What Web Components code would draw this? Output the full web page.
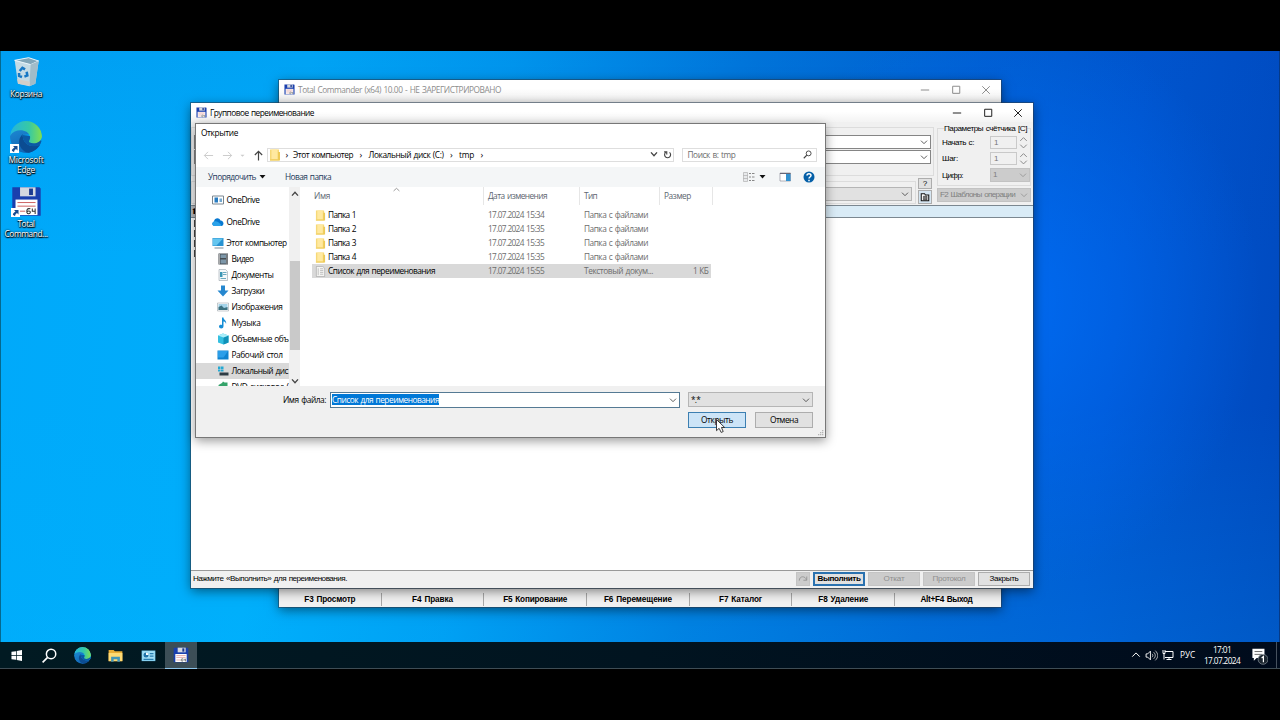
<!DOCTYPE html>
<html lang="ru">
<head>
    <meta charset="UTF-8">
    <meta name="viewport" content="width=device-width, initial-scale=1.0">
    <title>Групповое переименование</title>
    <style>
        body {
            margin: 0;
            background: #000;
            font: 8.3px/12px "Open Sans", "Noto Sans", sans-serif;
            word-spacing: .8px;
            color: #000;
            overflow: hidden;
        }
    </style>
</head>
<body>
    <template id="tmpl-desktop">
        <style>
            :host {
                display: grid;
                grid-template-rows: 591px 27px;
                box-sizing: border-box;
                width: 1280px;
                height: 720px;
                padding: 51px 0;
            }

            .wall {
                position: relative;
                overflow: hidden;
                border-left: 1px solid #05698f;
                border-right: 1px solid #063a86;
                background:
                    radial-gradient(ellipse 260px 290px at 1000px 250px, rgba(0, 112, 255, .7), rgba(0, 100, 245, 0)),
                    linear-gradient(180deg, rgba(0, 70, 180, .1), rgba(0, 120, 220, 0) 35%, rgba(0, 190, 255, 0) 60%, rgba(0, 190, 255, .14)),
                    linear-gradient(97deg, #00a9fa 0, #00adfb 23%, #009cf2 38%, #0078dd 56%, #0060d2 73%, #0056d0 85%, #0048bd 100%);
            }

            .icons {
                display: flex;
                flex-direction: column;
                width: 50px;
                padding-top: 4px;
            }
        </style>
        <div class="wall">
            <div class="icons"><slot name="icon"></slot></div>
            <slot></slot>
        </div>
        <slot name="taskbar"></slot>
    </template>

    <template id="tmpl-shortcut">
        <style>
            :host {
                display: flex;
                flex-direction: column;
                align-items: center;
                height: 65.5px;
                color: #fff;
                line-height: 10px;
                text-align: center;
                text-shadow: 0 1px 1px #000, 0 0 2px #000, 1px 1px 1px rgba(0, 0, 0, .8);
            }

            .pic {
                display: grid;
                margin-bottom: 2px;
            }

            .arrow,
            ::slotted([slot="pic"]) {
                grid-area: 1 / 1;
            }

            .arrow {
                align-self: end;
                justify-self: start;
            }

            :host(:not([link])) .arrow {
                display: none;
            }
        </style>
        <div class="pic">
            <slot name="pic"></slot>
            <win-icon class="arrow" name="link" size="9"></win-icon>
        </div>
        <slot></slot>
    </template>

    <template id="tmpl-window">
        <style>
            :host {
                position: absolute;
                display: flex;
                flex-direction: column;
                box-sizing: border-box;
                background: #f0f0f0;
                box-shadow: 0 0 0 1px rgba(40, 60, 80, .55), 0 3px 11px rgba(0, 0, 0, .5);
            }

            header {
                display: flex;
                align-items: center;
                flex: none;
                height: 19px;
                padding: 0 10px 0 5px;
                background: linear-gradient(#fff 45%, #f3f3f3);
            }

            :host([inactive]) header {
                color: #8d8d8d;
            }

            .title {
                flex: 1;
                margin-left: 3px;
            }

            .buttons {
                display: flex;
                gap: 20.5px;
            }

            :host([inactive]) .buttons {
                opacity: .5;
            }

            .body {
                display: flex;
                flex-direction: column;
                flex: 1;
                min-height: 0;
            }
        </style>
        <header>
            <win-icon name="floppy" size="11"></win-icon>
            <div class="title"><slot name="title"></slot></div>
            <div class="buttons">
                <win-icon name="min" size="10"></win-icon>
                <win-icon name="max" size="10"></win-icon>
                <win-icon name="close" size="10"></win-icon>
            </div>
        </header>
        <div class="body"><slot></slot></div>
    </template>

    <template id="tmpl-fkeys">
        <style>
            :host {
                display: grid;
                grid-template-columns: repeat(7, 102.7px);
                align-items: center;
                height: 16px;
                margin-top: auto;
                padding-top: 2px;
                border-top: 1px solid #9a9a9a;
                background: #f2f2f2;
                font: bold 8.2px/13px "Liberation Sans", sans-serif;
                color: #000;
                text-align: center;
            }

            ::slotted(*) {
                border-right: 1px solid #a9a9a9;
            }

            ::slotted(:last-child) {
                border-right: 0;
            }
        </style>
        <slot></slot>
    </template>

    <template id="tmpl-button">
        <style>
            :host {
                display: flex;
                align-items: center;
                justify-content: center;
                box-sizing: border-box;
                height: 14px;
                border: 1px solid #adadad;
                background: #e1e1e1;
                color: #000;
            }

            :host([disabled]) {
                border-color: #c4c4c4;
                background: #cccccc;
                color: #8f8f8f;
            }

            :host([primary]) {
                border: 2px solid #2a72b0;
            }

            :host([hot]) {
                border: 1px solid #3c7fb1;
                background: #cce4f7;
            }
        </style>
        <slot></slot>
    </template>

    <template id="tmpl-combo">
        <style>
            :host {
                display: flex;
                align-items: center;
                justify-content: space-between;
                box-sizing: border-box;
                height: 14px;
                padding: 0 2px 0 2px;
                border: 1px solid #858585;
                background: #fff;
            }

            :host([grey]) {
                border-color: #b5b5b5;
                background: #e1e1e1;
            }

            :host([disabled]) {
                border-color: #c2c2c2;
                background: #cccccc;
                color: #808080;
            }

            :host([disabled]) win-icon {
                opacity: .4;
            }
        </style>
        <span><slot></slot></span>
        <win-icon name="down" size="8"></win-icon>
    </template>

    <template id="tmpl-rename">
        <style>
            :host {
                display: flex;
                flex-direction: column;
                flex: 1;
                min-height: 0;
                font: 8.1px/12px "Liberation Sans", sans-serif;
            }

            .options {
                display: flex;
                justify-content: flex-end;
                box-sizing: border-box;
                height: 83px;
                padding: 4px 2px 0 0;
                background: #f0f0f0;
            }

            .left {
                display: flex;
                flex-direction: column;
                width: 743px;
                margin-right: 3px;
            }

            .group {
                box-sizing: border-box;
                border: 1px solid #dcdcdc;
            }

            .masks {
                display: flex;
                flex-direction: column;
                gap: 1px;
                height: 49px;
                margin-top: 1px;
                padding: 7px 2px 0;
            }

            .lower {
                display: flex;
                gap: 2px;
                padding: 2px 2px 0 0;
            }

            .search {
                flex: 1;
                height: 23px;
                margin-top: 3px;
                padding: 5px 3px 0;
            }

            .tools {
                display: flex;
                flex-direction: column;
                gap: 1px;
                width: 14px;
            }

            .tools win-button {
                height: 11px;
            }

            .tools win-button + win-button {
                height: 14px;
                background: #d6e6f2;
            }

            .right {
                width: 94px;
            }

            .counter {
                display: grid;
                grid-template-columns: 48px 27px 1fr;
                grid-template-rows: 12px 13px 14px;
                row-gap: 3.5px;
                align-items: center;
                height: 58px;
                margin-top: 2px;
                padding: 7px 1px 0 4px;
            }

            .counter fit-text {
                margin-top: 2px;
            }

            .legend {
                height: 0;
                padding-left: 7px;
                line-height: 6px;
            }

            .legend fit-text {
                position: relative;
                background: #f0f0f0;
            }

            .num {
                box-sizing: border-box;
                height: 13px;
                padding-left: 3px;
                border: 1px solid #c9c9c9;
                line-height: 11px;
                color: #777;
            }

            .counter win-combo {
                grid-column: 2 / 4;
            }

            .counter win-icon {
                justify-self: center;
            }

            .right > win-combo {
                margin-top: 2px;
            }

            .head {
                display: flex;
                align-items: center;
                box-sizing: border-box;
                height: 13px;
                border: solid #7b8790;
                border-width: 1px 0;
                background: #d9ebf6;
            }

            .head span {
                width: 5px;
                height: 11px;
                background: #b8bcc0;
                color: #000;
                line-height: 11px;
            }

            .list {
                display: flex;
                flex-direction: column;
                flex: 1;
                padding: 2px 0 0 3px;
                background: #fff;
            }

            .list i {
                box-sizing: border-box;
                width: 6px;
                height: 7px;
                margin-bottom: 3px;
                border: 1px solid #444;
            }

            footer {
                display: grid;
                grid-template-columns: 1fr 14px 52px 52px 52px 52px;
                column-gap: 3px;
                align-items: center;
                box-sizing: border-box;
                height: 18px;
                padding: 0 3px 1px 2px;
                border-top: 1px solid #999;
                background: #f0f0f0;
                color: #000;
            }

            footer win-button[primary] {
                font-weight: bold;
            }
        </style>
        <div class="options">
            <div class="left">
                <div class="group masks">
                    <win-combo></win-combo>
                    <win-combo></win-combo>
                </div>
                <div class="lower">
                    <div class="group search"><win-combo grey></win-combo></div>
                    <div class="tools">
                        <win-button>?</win-button>
                        <win-button><win-icon name="folderlist" size="10"></win-icon></win-button>
                    </div>
                </div>
            </div>
            <div class="right">
                <div class="legend"><fit-text w="83">Параметры счётчика [C]</fit-text></div>
                <div class="group counter">
                    <fit-text w="32">Начать с:</fit-text><div class="num">1</div><win-icon name="spin" size="13"></win-icon>
                    <fit-text w="16">Шаг:</fit-text><div class="num">1</div><win-icon name="spin" size="13"></win-icon>
                    <fit-text w="21">Цифр:</fit-text><win-combo disabled>1</win-combo>
                </div>
                <win-combo disabled><fit-text w="75">F2 Шаблоны операции</fit-text></win-combo>
            </div>
        </div>
        <div class="head"><span>⬆</span></div>
        <div class="list"><i></i><i></i><i></i><i></i></div>
        <footer>
            <fit-text w="154">Нажмите «Выполнить» для переименования.</fit-text>
            <win-button disabled><win-icon name="redo" size="10"></win-icon></win-button>
            <win-button primary><fit-text w="43">Выполнить</fit-text></win-button>
            <win-button disabled><fit-text w="21">Откат</fit-text></win-button>
            <win-button disabled><fit-text w="33">Протокол</fit-text></win-button>
            <win-button><fit-text w="29">Закрыть</fit-text></win-button>
        </footer>
    </template>

    <template id="tmpl-nav">
        <style>
            :host {
                display: flex;
                align-items: center;
                gap: 3px;
                flex: none;
                height: 16px;
                padding-left: 20.5px;
                overflow: hidden;
                white-space: nowrap;
            }

            :host([root]) {
                height: 21.5px;
                padding-left: 15.5px;
            }

            :host([selected]) {
                background: #d9d9d9;
            }
        </style>
        <win-icon size="12"></win-icon>
        <slot></slot>
    </template>

    <template id="tmpl-file">
        <style>
            :host {
                display: grid;
                grid-template-columns: 16px 160px 96px 80px 44px;
                align-items: center;
                width: 399px;
                height: 14px;
                color: #6d6d6d;
            }

            :host([selected]) {
                background: #d9d9d9;
            }

            win-icon {
                margin-left: 3px;
            }

            .name {
                color: #000;
            }

            .size {
                text-align: right;
            }
        </style>
        <win-icon size="11"></win-icon>
        <span class="name"><slot></slot></span>
        <span><slot name="date"></slot></span>
        <span><slot name="type"></slot></span>
        <span class="size"><slot name="size"></slot></span>
    </template>

    <template id="tmpl-dialog">
        <style>
            :host {
                position: absolute;
                display: flex;
                flex-direction: column;
                box-sizing: border-box;
                border: 1px solid #777;
                background: #fff;
                box-shadow: 0 3px 10px rgba(0, 0, 0, .4);
            }

            .caption {
                height: 24px;
                padding-left: 5px;
                line-height: 18px;
            }

            .address {
                display: flex;
                align-items: center;
                height: 14px;
                padding-left: 7px;
            }

            .address > win-icon {
                margin-right: 7.5px;
            }

            .path,
            .find {
                display: flex;
                align-items: center;
                box-sizing: border-box;
                height: 14px;
                padding-bottom: 1px;
                border: 1px solid #dedede;
            }

            .path {
                width: 407px;
                margin-left: -4.5px;
                padding-left: 1px;
            }

            .path .sep {
                width: 15.5px;
                text-align: center;
                font-size: 9px;
                line-height: 11px;
            }

            .path .sep:first-of-type {
                width: 12.5px;
            }

            .path .end {
                display: flex;
                gap: 5px;
                margin: 0 1px 0 auto;
            }

            .find {
                justify-content: space-between;
                width: 135px;
                margin-left: 8px;
                padding: 0 4px 1px 5px;
                color: #6d6d6d;
            }

            .toolbar {
                display: flex;
                align-items: center;
                box-sizing: border-box;
                height: 20px;
                margin-top: 5px;
                padding: 0 10px 1px 12px;
                background: #f4f6f7;
                color: #1e395b;
            }

            .toolbar .gap {
                margin-left: 18px;
            }

            .toolbar .end {
                display: flex;
                align-items: center;
                margin-left: auto;
            }

            .main {
                display: grid;
                grid-template-columns: 93px 11px 1fr;
                height: 199px;
                overflow: hidden;
            }

            .tree {
                display: flex;
                flex-direction: column;
                box-sizing: border-box;
                height: 199px;
                padding-top: 2.5px;
                overflow: hidden;
            }

            .scroll {
                display: grid;
                grid-template-rows: 74px 89px 1fr;
                height: 199px;
                background: #f0f0f0;
                justify-items: center;
            }

            .scroll b {
                width: 10px;
                background: #c9c9c9;
            }

            .scroll win-icon:first-child {
                margin-top: 3px;
            }

            .scroll win-icon:last-child {
                align-self: end;
                margin-bottom: 1px;
            }

            .files {
                padding-left: 12px;
            }

            .cols {
                display: grid;
                grid-template-columns: 172px 96px 80px 53px;
                height: 17px;
                margin-bottom: 4px;
                color: #5d6670;
                line-height: 18px;
            }

            .cols div {
                padding-left: 4px;
                border-right: 1px solid #e6e6e6;
            }

            .cols div:first-child {
                display: flex;
                padding-left: 2px;
            }

            .cols win-icon {
                margin: -1px 0 0 63px;
            }

            .footer {
                display: grid;
                grid-template-columns: 130px 340px 58px 58px;
                column-gap: 9px;
                row-gap: 5px;
                align-content: start;
                flex: 1;
                padding: 6px 0 0 4px;
                background: #f0f0f0;
            }

            .label {
                align-self: center;
                justify-self: end;
                margin-right: 4px;
            }

            .footer .name {
                height: 16px;
                margin-left: -9px;
                margin-right: -1px;
                padding-left: 1px;
                border-color: #557a94;
            }

            .name mark {
                background: #0078d7;
                color: #fff;
            }

            .filter {
                grid-column: 3 / 5;
                height: 15px;
            }

            .footer win-button {
                height: 16px;
                margin-top: -1px;
            }

            .open {
                grid-column: 3;
            }

            .grip {
                position: absolute;
                right: 1px;
                bottom: 1px;
            }
        </style>
        <div class="caption"><fit-text w="37">Открытие</fit-text></div>
        <div class="address">
            <win-icon name="back" size="11"></win-icon>
            <win-icon name="fwd" size="11"></win-icon>
            <win-icon name="tinydown" size="5"></win-icon>
            <win-icon name="up" size="11"></win-icon>
            <div class="path">
                <win-icon name="folder" size="12"></win-icon>
                <span class="sep">›</span><fit-text w="60">Этот компьютер</fit-text>
                <span class="sep">›</span><fit-text w="75">Локальный диск (C:)</fit-text>
                <span class="sep">›</span><fit-text w="15">tmp</fit-text>
                <span class="sep">›</span>
                <div class="end">
                    <win-icon name="downbold" size="8"></win-icon>
                    <win-icon name="refresh" size="9"></win-icon>
                </div>
            </div>
            <div class="find"><fit-text w="48">Поиск в: tmp</fit-text><win-icon name="search" size="9"></win-icon></div>
        </div>
        <div class="toolbar">
            <fit-text w="48">Упорядочить</fit-text><win-icon name="caret" size="9" style="margin-left: 2px"></win-icon>
            <fit-text class="gap" w="46">Новая папка</fit-text>
            <div class="end">
                <win-icon name="view" size="12"></win-icon>
                <win-icon name="caret" size="9" style="margin: 0 12px 0 3px"></win-icon>
                <win-icon name="pane" size="12"></win-icon>
                <win-icon name="help" size="12" style="margin-left: 12px"></win-icon>
            </div>
        </div>
        <div class="main">
            <div class="tree">
                <nav-item root icon="onedrive-old"><fit-text w="33">OneDrive</fit-text></nav-item>
                <nav-item root icon="cloud"><fit-text w="33">OneDrive</fit-text></nav-item>
                <nav-item root icon="pc"><fit-text w="60">Этот компьютер</fit-text></nav-item>
                <nav-item icon="video" style="margin-top: -3px"><fit-text w="22">Видео</fit-text></nav-item>
                <nav-item icon="docs"><fit-text w="42">Документы</fit-text></nav-item>
                <nav-item icon="load"><fit-text w="33">Загрузки</fit-text></nav-item>
                <nav-item icon="image"><fit-text w="51">Изображения</fit-text></nav-item>
                <nav-item icon="music"><fit-text w="29">Музыка</fit-text></nav-item>
                <nav-item icon="cube"><fit-text w="57">Объемные объ</fit-text></nav-item>
                <nav-item icon="desk"><fit-text w="51">Рабочий стол</fit-text></nav-item>
                <nav-item icon="disk" selected><fit-text w="56.5">Локальный дис</fit-text></nav-item>
                <nav-item icon="dvd"><fit-text w="57">DVD-дисковод (</fit-text></nav-item>
            </div>
            <div class="scroll">
                <win-icon name="upbold" size="8"></win-icon>
                <b></b>
                <win-icon name="downbold" size="8"></win-icon>
            </div>
            <div class="files">
                <div class="cols">
                    <div><fit-text w="16">Имя</fit-text><win-icon name="sort" size="7"></win-icon></div>
                    <div><fit-text w="59">Дата изменения</fit-text></div>
                    <div><fit-text w="13">Тип</fit-text></div>
                    <div><fit-text w="27">Размер</fit-text></div>
                </div>
                <slot></slot>
            </div>
        </div>
        <div class="footer">
            <fit-text class="label" w="43">Имя файла:</fit-text>
            <win-combo class="name"><mark><fit-text w="107">Список для переименования</fit-text></mark></win-combo>
            <win-combo class="filter" grey><fit-text w="9">*.*</fit-text></win-combo>
            <win-button class="open" hot><fit-text w="32">Открыть</fit-text></win-button>
            <win-button><fit-text w="28">Отмена</fit-text></win-button>
        </div>
        <win-icon class="grip" name="grip" size="8"></win-icon>
    </template>

    <template id="tmpl-taskbar">
        <style>
            :host {
                display: flex;
                align-items: stretch;
                background: linear-gradient(90deg, #011a22, #011420 50%, #000b1c);
                box-shadow: inset 0 -1px #3f4d55;
                color: #fff;
            }

            .app {
                display: flex;
                align-items: center;
                justify-content: center;
                width: 33px;
            }

            .active {
                width: 31.5px;
                box-sizing: border-box;
                border-bottom: 1.5px solid #8cc4ea;
                background: #3c4e57;
            }

            .tray {
                display: flex;
                align-items: center;
                margin-left: auto;
                padding-bottom: 1px;
            }

            .tray win-icon {
                margin-right: 4px;
            }

            .clock {
                width: 54px;
                line-height: 11.5px;
                text-align: center;
            }

            .edge {
                align-self: stretch;
                width: 3px;
                margin-left: 8px;
                border-left: 1px solid #46515e;
            }
        </style>
        <div class="app"><win-icon name="start" size="11"></win-icon></div>
        <div class="app"><win-icon name="lens" size="15"></win-icon></div>
        <div class="app"><win-icon name="edge" size="17"></win-icon></div>
        <div class="app"><win-icon name="explorer" size="15"></win-icon></div>
        <div class="app"><win-icon name="panel" size="15"></win-icon></div>
        <div class="app active"><win-icon name="floppy" size="16"></win-icon></div>
        <div class="tray">
            <win-icon name="chevron" size="10"></win-icon>
            <win-icon name="sound" size="13"></win-icon>
            <win-icon name="net" size="12" style="margin-right: 6px"></win-icon>
            <fit-text w="15">РУС</fit-text>
            <div class="clock"><fit-text w="18">17:01</fit-text><br><fit-text w="36">17.07.2024</fit-text></div>
            <win-icon name="note" size="17" style="margin: 3px 0 0 2px"></win-icon>
            <div class="edge"></div>
        </div>
    </template>

    <desktop-screen>
        <desktop-shortcut slot="icon">
            <win-icon slot="pic" name="bin" size="32"></win-icon>
            <fit-text w="32">Корзина</fit-text>
        </desktop-shortcut>
        <desktop-shortcut slot="icon" link>
            <win-icon slot="pic" name="edge" size="32"></win-icon>
            <fit-text w="35">Microsoft</fit-text>
            <fit-text w="18">Edge</fit-text>
        </desktop-shortcut>
        <desktop-shortcut slot="icon" link>
            <win-icon slot="pic" name="floppy" size="31"></win-icon>
            <fit-text w="17">Total</fit-text>
            <fit-text w="43">Command...</fit-text>
        </desktop-shortcut>

        <app-window inactive style="left: 278px; top: 29px; width: 722px; height: 527px">
            <fit-text slot="title" w="203">Total Commander (x64) 10.00 - НЕ ЗАРЕГИСТРИРОВАНО</fit-text>
            <function-keys>
                <span><fit-text w="51">F3 Просмотр</fit-text></span>
                <span><fit-text w="41">F4 Правка</fit-text></span>
                <span><fit-text w="64">F5 Копирование</fit-text></span>
                <span><fit-text w="68">F6 Перемещение</fit-text></span>
                <span><fit-text w="43">F7 Каталог</fit-text></span>
                <span><fit-text w="50">F8 Удаление</fit-text></span>
                <span><fit-text w="52">Alt+F4 Выход</fit-text></span>
            </function-keys>
        </app-window>

        <app-window style="left: 190px; top: 52px; width: 842px; height: 485px">
            <fit-text slot="title" w="104">Групповое переименование</fit-text>
            <rename-tool></rename-tool>
        </app-window>

        <open-dialog style="left: 194px; top: 72px; width: 631px; height: 315px">
            <file-row icon="folder"><fit-text w="28">Папка 1</fit-text><fit-text slot="date" w="56">17.07.2024 15:34</fit-text><fit-text slot="type" w="64">Папка с файлами</fit-text></file-row>
            <file-row icon="folder"><fit-text w="28">Папка 2</fit-text><fit-text slot="date" w="56">17.07.2024 15:35</fit-text><fit-text slot="type" w="64">Папка с файлами</fit-text></file-row>
            <file-row icon="folder"><fit-text w="28">Папка 3</fit-text><fit-text slot="date" w="56">17.07.2024 15:35</fit-text><fit-text slot="type" w="64">Папка с файлами</fit-text></file-row>
            <file-row icon="folder"><fit-text w="28">Папка 4</fit-text><fit-text slot="date" w="56">17.07.2024 15:35</fit-text><fit-text slot="type" w="64">Папка с файлами</fit-text></file-row>
            <file-row icon="text" selected><fit-text w="107">Список для переименования</fit-text><fit-text slot="date" w="56">17.07.2024 15:55</fit-text><fit-text slot="type" w="69">Текстовый докум...</fit-text><fit-text slot="size" w="15">1 КБ</fit-text></file-row>
        </open-dialog>

        <win-icon name="cursor" size="14" style="position: absolute; left: 712px; top: 368px"></win-icon>
        <task-bar slot="taskbar"></task-bar>
    </desktop-screen>

    <script>
        // every icon is drawn on a 24x24 grid
        const line = (d, w = 2, c = '#222') => `<path d="${d}" fill="none" stroke="${c}" stroke-width="${w}"/>`;
        const icons = {
            min: line('M2 12H22', 2.4),
            max: line('M4 3H21V20H4Z', 2.4),
            close: line('M3 3L21 21M21 3L3 21', 2.4),
            down: line('M3 8L12 17L21 8', 2.6, '#444'),
            downbold: line('M3 7L12 17L21 7', 4, '#444'),
            upbold: line('M3 17L12 7L21 17', 4, '#444'),
            sort: line('M2 17L12 8L22 17', 2.5, '#777'),
            spin: line('M6 9L12 3L18 9M6 16L12 22L18 16', 1.8, '#888'),
            tinydown: '<path d="M2 8H22L12 18Z" fill="#ccc"/>',
            caret: '<path d="M4 8H20L12 17Z" fill="#111"/>',
            back: line('M22 12H3M11 4L3 12L11 20', 2, '#c8c8c8'),
            fwd: line('M2 12H21M13 4L21 12L13 20', 2, '#c8c8c8'),
            up: line('M12 23V3M4 11L12 3L20 11', 2.6, '#444'),
            refresh: line('M17.5 6.5A8 8 0 1 1 7 6.5M3 5H10V12', 3, '#444'),
            search: line('M2 22L10 14', 3, '#444') + '<circle cx="15" cy="9" r="6.5" fill="none" stroke="#444" stroke-width="2.5"/>',
            redo: line('M3 16C3 4 18 4 20 14M21 6V15H13', 2, '#909090'),
            grip: '<path d="M18 6h4v4h-4zM12 12h4v4h-4zM18 12h4v4h-4zM6 18h4v4H6zM12 18h4v4h-4zM18 18h4v4h-4z" fill="#b5b5b5"/>',
            view: '<path d="M1 3H9V21H1Z" fill="#e8eaec" stroke="#999"/>' + line('M1 9H9M1 15H9', 1, '#999') + line('M12 5H16M18 5H23M12 12H16M18 12H23M12 19H16M18 19H23', 2, '#888'),
            pane: '<path d="M2 4H23V20H2Z" fill="#fff" stroke="#667"/><path d="M2 4H23V6H2Z" fill="#667"/><path d="M14 6H23V20H14Z" fill="#3291cf"/>',
            help: '<circle cx="12" cy="12" r="11" fill="#0560a8"/>' + line('M8 9C8 4 16 4 16 9C16 12 12 12 12 15M12 17.5V20.5', 3, '#fff'),
            folderlist: '<path d="M3 4H11L13 7H21V21H3Z" fill="#fff" stroke="#111" stroke-width="2.5"/><path d="M8 10H17V19H8Z" fill="#777" stroke="#111"/>',
            folder: '<path d="M2 1H20V23H2Z" fill="#f6d978"/><path d="M5 1H17V20H5Z" fill="#ffe9a0"/><path d="M18 6H22V23H2V21H18Z" fill="#edca57"/>',
            text: '<path d="M3 1H17L21 5V23H3Z" fill="#f5f5f3" stroke="#888"/>' + line('M7 5V20M11 6H18M11 10H18M11 14H18M11 18H18', 1.5, '#aaa'),
            'onedrive-old': '<path d="M1 4H23V20H1Z" fill="#fff" stroke="#7b8791" stroke-width="2"/><path d="M5 7H12V17H5Z" fill="#277bc0"/><path d="M15 9H20V16H15Z" fill="#73a8cf"/>',
            cloud: '<path d="M6 20C-1 20-1 13 4 11C5 4 14 2 17 9C24 9 25 19 19 20Z" fill="#0878d0"/><path d="M4 11C8 9 13 12 17 16L19 20H6C0 20-1 14 4 11Z" fill="#2aa2e9"/>',
            pc: '<path d="M1 2H23V18H1Z" fill="#2993d1"/><path d="M2 3H22L9 17H2Z" fill="#64c5ef"/><path d="M5 21H23V23H5Z" fill="#798b99"/>',
            video: '<path d="M3 1H22V23H3Z" fill="#454b50"/><path d="M7 3H18V10H7ZM7 13H18V21H7Z" fill="#7d97a9"/>' + line('M5 2V23M20 2V23', 1.5, '#ccc'),
            docs: '<path d="M4 1H17L21 5V23H4Z" fill="#f4f8f9" stroke="#87939c"/>' + line('M12 7H19M12 11H19M7 19H18', 2, '#6ba9bf') + '<path d="M6 6H11V16H6Z" fill="#3b96b4"/>',
            load: '<path d="M8 1H16V11H23L12 23L1 11H8Z" fill="#2587cf"/>',
            image: '<path d="M1 4H23V20H1Z" fill="#fff" stroke="#8c969d"/><path d="M3 6H21V18H3Z" fill="#a4d3e9"/><path d="M3 12L9 9L14 14L21 12V18H3Z" fill="#3c7180"/>',
            music: '<path d="M10 1H13C13 6 20 7 18 14C18 10 14 9 13 9V18C13 25 4 24 4 19C4 15 8 15 10 16Z" fill="#168dd5"/>',
            cube: '<path d="M2 5L12 1L23 5V19L13 23L2 19Z" fill="#35bfe0"/><path d="M13 9L23 5V19L13 23Z" fill="#0f91b8"/><path d="M2 5L12 1L23 5L13 9Z" fill="#a9eefa"/>',
            desk: '<path d="M1 3H23V21H1Z" fill="#0f82cf"/><path d="M2 4H22L13 17H2Z" fill="#2b9ee9"/>',
            disk: '<path d="M2 3H7V8H2ZM8 3H13V8H8ZM2 9H7V13H2ZM8 9H13V13H8Z" fill="#25a9d3"/><path d="M5 15H23V21H5Z" fill="#2e3c45"/>',
            dvd: '<path d="M3 8L10 4L12 1L15 3L21 3V20H4Z" fill="#35a36a"/><circle cx="12" cy="17" r="6" fill="#c8d8d8"/>',
            start: '<path d="M1 4L11 2.5V11.5H1ZM12.5 2.2L24 0V11.5H12.5ZM1 13H11V21.5L1 20ZM12.5 13H24V24L12.5 22Z" fill="#fff"/>',
            lens: '<circle cx="14.5" cy="9.5" r="7.5" fill="none" stroke="#fff" stroke-width="2.4"/>' + line('M1 23L9 15', 2.6, '#fff'),
            chevron: line('M3 16L12 7L21 16', 2.4, '#fff'),
            sound: line('M2 9H5L10 4V20L5 15H2Z', 1.7, '#fff') + line('M13 9C15 11 15 13 13 15M16 6C20 10 20 14 16 18M19 3C25 9 25 15 19 21', 1.6, '#ccc'),
            net: line('M6 5H22V17H6M14 17V21M9 21H19M2 2V9H6V2M4 9V21', 2, '#fff'),
            note: '<path d="M2 1H19V14H8L4 18V14H2Z" fill="#fff"/>' + line('M5 5H16M5 9H16', 1.2, '#555') + '<circle cx="17" cy="16" r="7" fill="#1d2730" stroke="#8a949c"/>' + line('M15 14L17.5 12V20', 1.7, '#fff'),
            explorer: '<path d="M1 3H9L11 5H23V21H1Z" fill="#e9ad35"/><path d="M1 8H23V21H1Z" fill="#ffda73"/><path d="M5 22V14H19V22H15V18H9V22Z" fill="#4295b8"/>',
            panel: '<path d="M1 4H23V21H1Z" fill="#6ac2ea"/><path d="M2 5H22V20H2Z" fill="#a2def6"/><circle cx="8" cy="11" r="4" fill="#2273a8"/><path d="M8 11V7A4 4 0 0 1 12 11Z" fill="#fff"/>' + line('M14 9H20M14 13H20M4 18H20', 2, '#287eb1'),
            floppy: '<path d="M1 1H22L23 2V23H1Z" fill="#1a3fae"/><path d="M7 1H19V8H7Z" fill="#d4d8e0"/><path d="M14 2H17V7H14Z" fill="#1c3990"/><path d="M3.5 10.5H20.5V22.5H3.5Z" fill="#fff"/>' + line('M5 12.8H19M5 15.6H19M5 19.5H11', .7, '#c85454') + line('M15 17.7C12.5 17 12 18.5 12.3 20.5C13 22 15 21.5 15 20.3C15 19 13 19 12.4 20M16.5 17.5V19.5H19M18.7 17.5V21.7', .8, '#333'),
            link: '<path d="M0 0H24V24H0Z" fill="#fff"/><path d="M8 5H20V17L16 13C12 15 11 18 11 22L5 18C5 14 8 11 12 9Z" fill="#174d91"/>',
            bin: '<path d="M3.5 4L14 2L21.5 4.5L19 21.5L14.5 23.5L6 21.5Z" fill="#c4dbe6"/><path d="M3.5 4L14 2L21.5 4.5L15.5 7.2Z" fill="#81a6b9" stroke="#eef9ff" stroke-width=".7"/><path d="M15.5 7.2L21.5 4.5L19 21.5L14.5 23.5Z" fill="#a1bcc9"/><path d="M5.3 18L14.8 20V23L6 21.5Z" fill="#d3cfc9"/>' + line('M7.3 12L9.3 9.6L11.3 10.8M12.5 12.6L13 15.4L10.8 16.2M9 16.5L6.8 15.6V13.5', 1.9, '#1677c4'),
            edge: `<defs>
                    <linearGradient id="a" x1="0" x2="1"><stop stop-color="#23b5df"/><stop offset=".6" stop-color="#37c9a4"/><stop offset="1" stop-color="#82df4e"/></linearGradient>
                    <linearGradient id="b" y2="1" x2=".4"><stop stop-color="#1f93dc"/><stop offset="1" stop-color="#1165b4"/></linearGradient>
                    <clipPath id="c"><circle cx="12" cy="12" r="12"/></clipPath>
                </defs>
                <g clip-path="url(#c)">
                    <circle cx="12" cy="12" r="12" fill="url(#b)"/>
                    <path d="M9.5 10C4 15 8 23 14 24H20L23 17.5C15 21 9.5 17 9.5 10Z" fill="#0b4c92"/>
                    <path d="M9.6 10.5C9.5 17 16 21 23 17.5L25 22V26H27V8L15 10Z" fill="#00a9f8"/>
                    <path d="M9.6 10.5C9 16 14 20.5 21 18.5L24 17V15L14 11Z" fill="#0b5aa5"/>
                    <path d="M0 11C1-4 24-5 24 11C24 16 18 18 14.5 16C13.5 15 15.5 14 15 11.5C13.5 6 4 5 0 11Z" fill="url(#a)"/>
                </g>`,
            cursor: '<path d="M6 1V20L10.5 16L14 23L17.5 21.5L14.5 14.5H20Z" fill="#fff" stroke="#222" stroke-width="1.5"/>'
        };

        const fits = [];

        customElements.define('win-icon', class extends HTMLElement {
            connectedCallback() {
                if (!this.shadowRoot) this.attachShadow({ mode: 'open' });
                const size = this.getAttribute('size');
                this.shadowRoot.innerHTML = `
                    <style>
                        :host { display: inline-block; flex: none; width: ${size}px; height: ${size}px; }
                        svg { display: block; }
                    </style>
                    <svg width="${size}" height="${size}" viewBox="0 0 24 24">${icons[this.getAttribute('name')] || ''}</svg>`;
            }
        });

        // text that is tracked so that it takes up exactly w pixels
        customElements.define('fit-text', class extends HTMLElement {
            connectedCallback() {
                if (this.shadowRoot) return;
                this.attachShadow({ mode: 'open' }).innerHTML = `
                    <style>
                        :host { display: inline-block; white-space: nowrap; }
                        span { display: inline-block; }
                    </style>
                    <span><slot></slot></span>`;
                fits.push(this);
            }

            fit() {
                const span = this.shadowRoot.querySelector('span');
                const width = span.getBoundingClientRect().width;
                const count = this.textContent.length;
                if (width) span.style.letterSpacing = (this.getAttribute('w') - width) / count + 'px';
            }
        });

        function define(name, template) {
            customElements.define(name, class extends HTMLElement {
                connectedCallback() {
                    if (this.shadowRoot) return;
                    const content = template.content.cloneNode(true);
                    if (this.hasAttribute('icon')) {
                        content.querySelector('win-icon').setAttribute('name', this.getAttribute('icon'));
                    }
                    this.attachShadow({ mode: 'open' }).append(content);
                }
            });
        }

        const byId = id => document.getElementById('tmpl-' + id);
        define('win-button', byId('button'));
        define('win-combo', byId('combo'));
        define('nav-item', byId('nav'));
        define('file-row', byId('file'));
        define('function-keys', byId('fkeys'));
        define('rename-tool', byId('rename'));
        define('open-dialog', byId('dialog'));
        define('app-window', byId('window'));
        define('desktop-shortcut', byId('shortcut'));
        define('task-bar', byId('taskbar'));
        define('desktop-screen', byId('desktop'));

        fits.forEach(el => el.fit());
    </script>
</body>
</html>
